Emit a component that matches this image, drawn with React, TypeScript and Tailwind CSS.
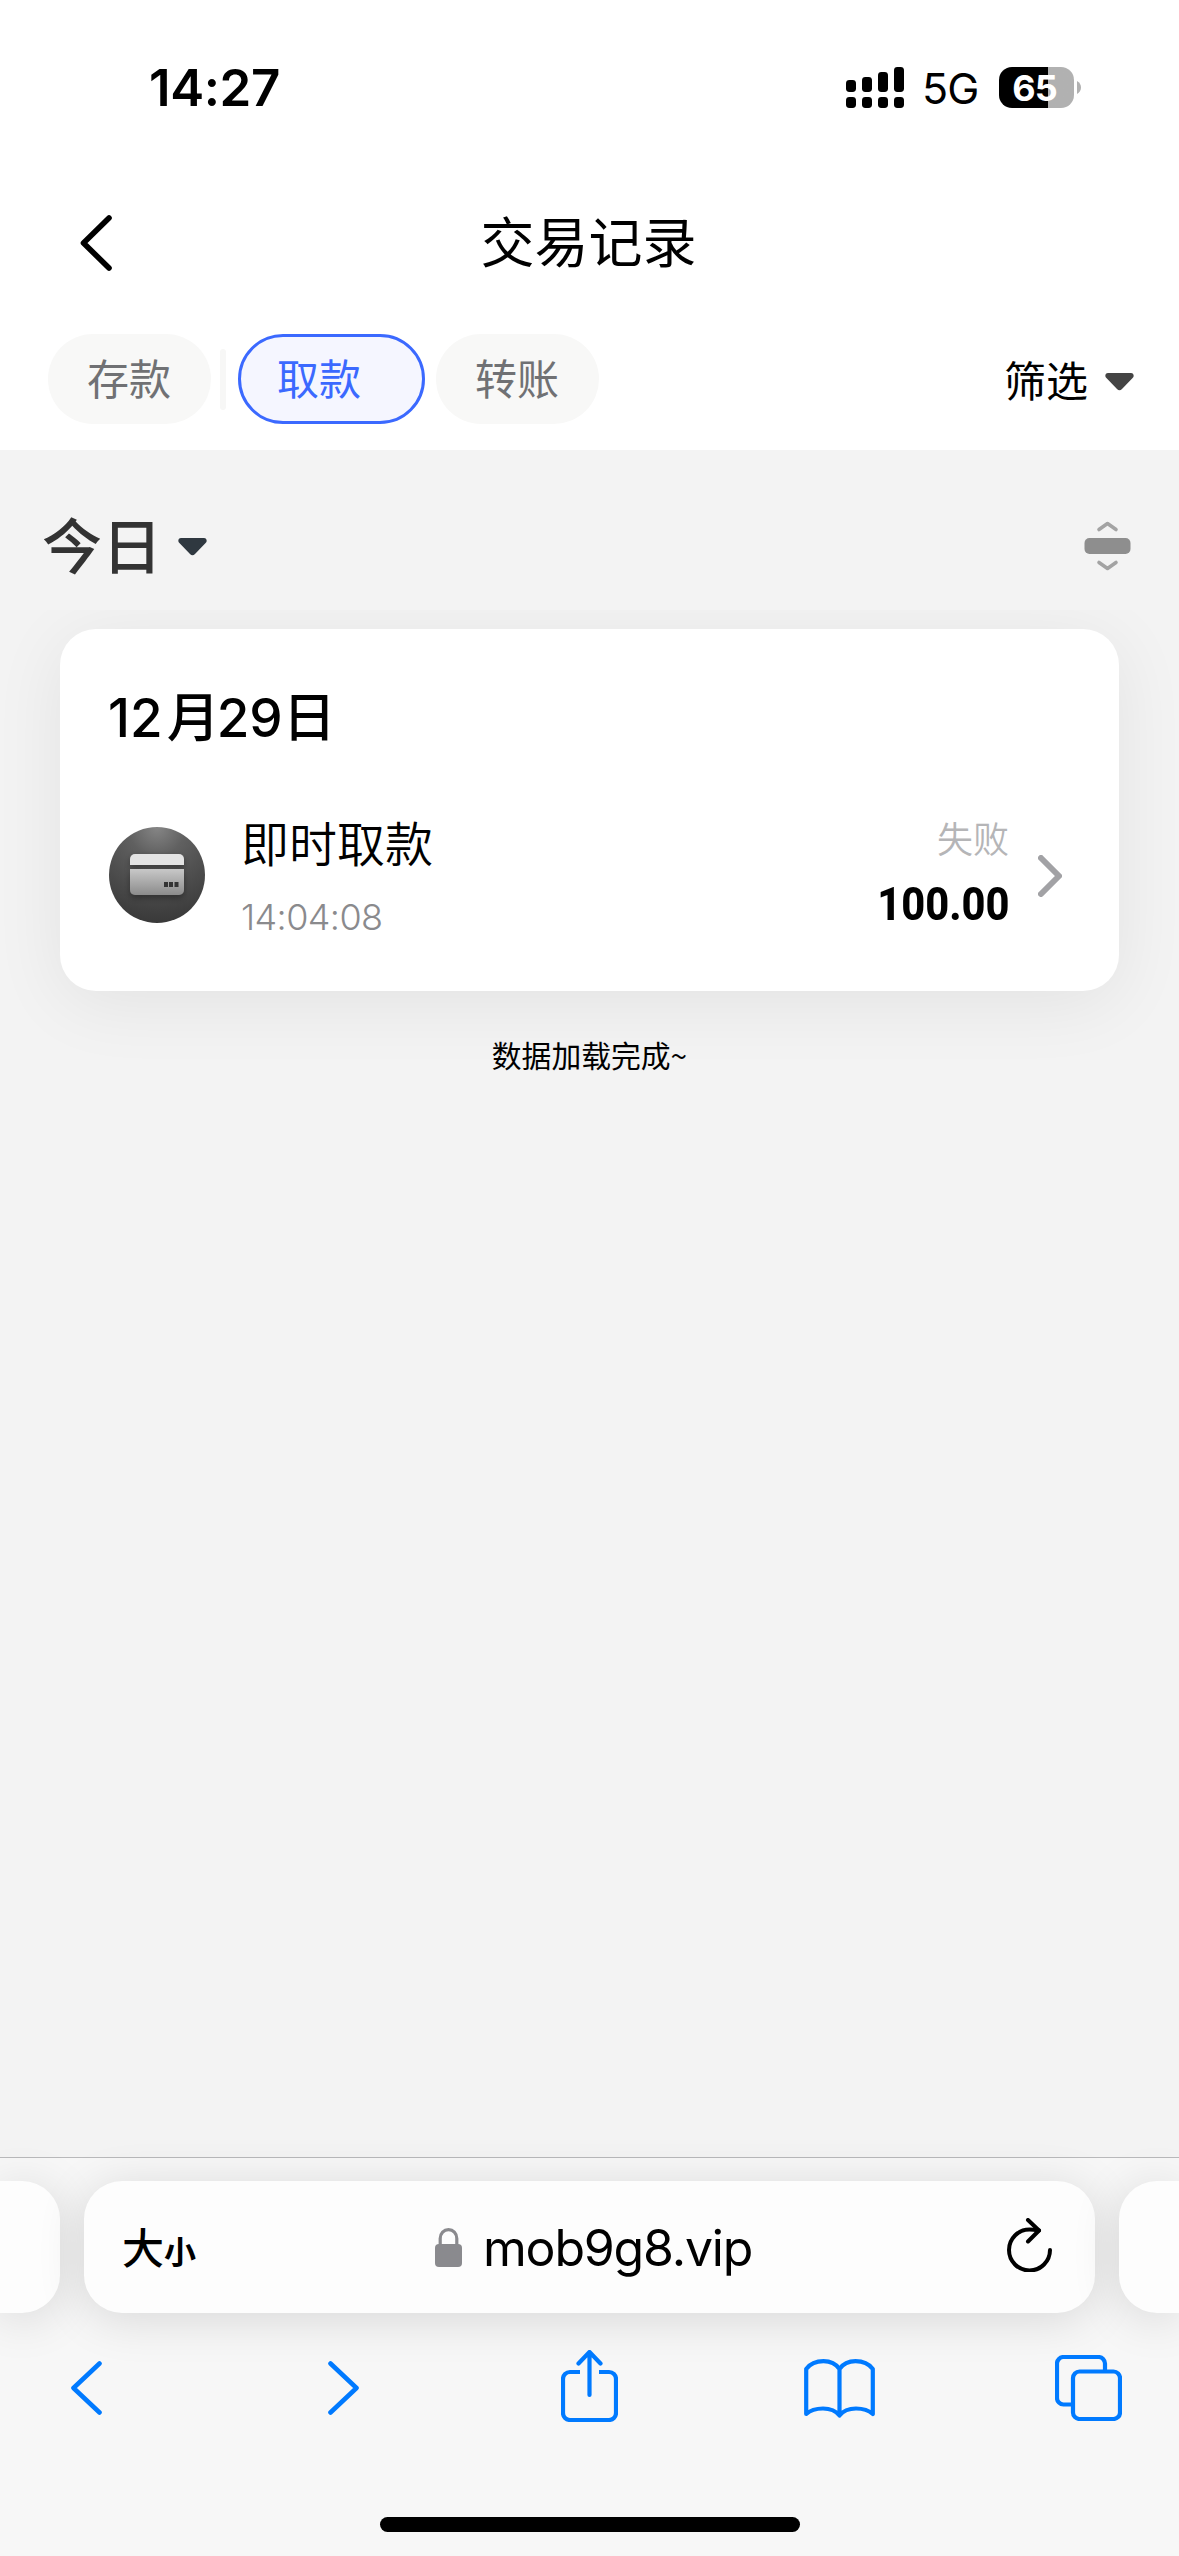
import React, { useState } from 'react';

interface IRecord {
  id: string;
  title: string;
  time: string;
  status: string;
  amount: string;
}

const RECORDS: IRecord[] = [
  { id: 'w1', title: '即时取款', time: '14:04:08', status: '失败', amount: '100.00' },
];

// Heights of the signal bars, left to right
const SIGNAL_BARS = [
  { x: 0, y: 13, h: 12 },
  { x: 16, y: 10, h: 15 },
  { x: 32, y: 5, h: 20 },
  { x: 48, y: 0, h: 25 },
];

const StatusBar: React.FC = () => (
  <div className="flex h-[174px] items-start justify-between pl-[149px] pr-[98px] pt-[62px]">
    <span className="font-['Inter'] text-[51px] leading-[51px] font-semibold tracking-[-0.4px]">14:27</span>
    <div className="mt-[5px] flex h-[41px] items-center">
      <svg width="58" height="41" viewBox="0 0 58 41" className="mr-[18px]">
        {SIGNAL_BARS.map((bar) => (
          <g key={bar.x}>
            <rect x={bar.x} y={bar.y} width="10" height={bar.h} rx="3.4" />
            <rect x={bar.x} y="30" width="10" height="11" rx="3.4" />
          </g>
        ))}
      </svg>
      <span className="mt-0.5 mr-[22px] w-[55px] font-['Inter'] text-[43px] leading-none tracking-[-1px] whitespace-nowrap">5G</span>
      <div className="flex h-[41px] w-[75px] items-center justify-center rounded-[13px] bg-linear-to-r from-black from-65% to-[#b1b1b1] to-65% pr-[4px]">
        <span className="font-['Inter'] text-[36px] leading-none font-bold tracking-[-1px] text-white">65</span>
      </div>
      <svg width="4" height="13" viewBox="0 0 4 13" className="ml-[3px]">
        <path d="M0 0C2.6 1.2 4 3.7 4 6.5S2.6 11.8 0 13Z" fill="#b1b1b1" />
      </svg>
    </div>
  </div>
);

const CaretDown: React.FC<{ color: string }> = ({ color }) => (
  <svg width="29" height="18" viewBox="0 0 29 18">
    <path d="M3 0H26C28.7 0 29.6 3.2 27.6 5L17 16C15.4 17.6 13.6 17.6 12 16L1.4 5C-.6 3.2 .3 0 3 0Z" fill={color} />
  </svg>
);

const CardBadge: React.FC = () => (
  <svg width="96" height="96" viewBox="0 0 96 96">
    <defs>
      <radialGradient id="badgeFill" cx="50%" cy="0%" r="100%">
        <stop offset="0%" stopColor="#868686" />
        <stop offset="30%" stopColor="#606060" />
        <stop offset="65%" stopColor="#4c4c4c" />
        <stop offset="100%" stopColor="#393939" />
      </radialGradient>
      <linearGradient id="cardFill" x1="0" y1="0" x2="0" y2="1">
        <stop offset="0%" stopColor="#c8c8c8" />
        <stop offset="100%" stopColor="#8b8b8b" />
      </linearGradient>
      <filter id="cardShadow" x="-30%" y="-30%" width="160%" height="160%">
        <feDropShadow dx="0" dy="3" stdDeviation="3" floodColor="#000000" floodOpacity="0.35" />
      </filter>
    </defs>
    <circle cx="48" cy="48" r="48" fill="url(#badgeFill)" />
    <g filter="url(#cardShadow)">
      <path d="M21 38V32a5 5 0 0 1 5-5H70a5 5 0 0 1 5 5V38Z" fill="#e4e4e4" />
      <path d="M21 42H75V63a5 5 0 0 1-5 5H26a5 5 0 0 1-5-5Z" fill="url(#cardFill)" />
    </g>
    <path d="M55 55h4v5h-4zM60 55h4v5h-4zM65.500 55h4v5h-4z" fill="#333333" />
  </svg>
);

const RecordRow: React.FC<{ record: IRecord }> = ({ record }) => (
  <div className="flex items-start pr-[57px] pl-[49px]">
    <div className="mt-[10px]">
      <CardBadge />
    </div>
    <div className="ml-9 flex-1">
      <p className="-mt-[2px] font-['Noto_Sans_CJK_SC',sans-serif] text-[48px] leading-[52px] font-[350]">{record.title}</p>
      <p className="mt-[29px] font-['Inter'] text-[36px] leading-[42px] font-light tracking-[-0.6px] text-[#8a8a8d]">{record.time}</p>
    </div>
    <div className="flex flex-col items-end">
      <p className="-mt-px font-['Noto_Sans_CJK_SC',sans-serif] text-[36px] leading-[42px] font-[350] text-[#b5b5b7]">{record.status}</p>
      <p className="mt-6 origin-right scale-x-[0.885] font-['Roboto'] text-[47px] leading-[44px] font-extrabold">{record.amount}</p>
    </div>
    <svg width="24" height="42" viewBox="0 0 24 42" className="mt-[38px] ml-[29px]" fill="none">
      <path d="M3 3L21 21L3 39" stroke="#a2a2a5" strokeWidth="6" strokeLinecap="round" strokeLinejoin="round" />
    </svg>
  </div>
);

const BrowserBar: React.FC = () => (
  <div className="flex h-[399px] flex-col border-t border-[#b9b9bb] bg-[#f7f7f7]">
    <div className="mt-[23px] flex h-[132px] gap-[24.5px]">
      <div className="w-[59.5px] shrink-0 rounded-r-[38px] bg-[#fdfdfd] shadow-[0_6px_48px_rgba(0,0,0,0.13)]" />
      <div className="flex flex-1 items-center rounded-[38px] bg-[#fdfdfd] pr-[43px] pl-[38px] shadow-[0_6px_48px_rgba(0,0,0,0.13)]">
        <div className="flex w-[313px] items-baseline pb-0.5 font-['Noto_Sans_CJK_SC',sans-serif] leading-none">
          <span className="text-[42px] font-medium">大</span>
          <span className="text-[32px] font-bold">小</span>
        </div>
        <svg width="27" height="39" viewBox="0 0 27 39" fill="none">
          <rect y="16" width="27" height="23" rx="4" fill="#8a8a8e" />
          <path d="M5.200 18V10.500C5.200 5.200 8.900 1.600 13.500 1.600S21.800 5.200 21.800 10.500V18" stroke="#8a8a8e" strokeWidth="3.200" />
        </svg>
        <span className="mt-0.5 ml-[21px] flex-1 font-['Inter'] text-[50px] leading-none tracking-[-1.2px]">mob9g8.vip</span>
        <svg width="45" height="54" viewBox="0 0 45 54" className="-mt-1" fill="none" stroke="#000000" strokeWidth="4" strokeLinecap="round" strokeLinejoin="round">
          <path d="M43 32A20.500 20.500 0 1 1 22.500 11.500C26 11.500 29 12 32 12.500" />
          <path d="M21 2L32 12.500L21 23.500" />
        </svg>
      </div>
      <div className="w-[60px] shrink-0 rounded-l-[38px] bg-[#fdfdfd] shadow-[0_6px_48px_rgba(0,0,0,0.13)]" />
    </div>
    <div className="mt-[37px] flex h-[72px] items-start pl-[71px] text-[#007aff]">
      <svg width="31" height="54" viewBox="0 0 31 54" className="mt-[11px]" fill="none" stroke="currentColor" strokeWidth="4.600" strokeLinecap="round" strokeLinejoin="round">
        <path d="M28.500 2.500L2.500 27L28.500 51.500" />
      </svg>
      <svg width="31" height="54" viewBox="0 0 31 54" className="mt-[11px] ml-[226px]" fill="none" stroke="currentColor" strokeWidth="4.600" strokeLinecap="round" strokeLinejoin="round">
        <path d="M2.500 2.500L28.500 27L2.500 51.500" />
      </svg>
      <svg width="57" height="72" viewBox="0 0 57 72" className="ml-[202px]" fill="none" stroke="currentColor" strokeWidth="4.200" strokeLinejoin="round">
        <path d="M19 22H9a7 7 0 0 0-7 7V63a7 7 0 0 0 7 7H48a7 7 0 0 0 7-7V29a7 7 0 0 0-7-7H38" />
        <path d="M28.500 45V2.500M17.500 13.500L28.500 2L39.500 13.500" strokeLinecap="round" />
      </svg>
      <svg width="71" height="60" viewBox="0 0 71 60" className="mt-[9px] ml-[186px]" fill="none" stroke="currentColor" strokeWidth="4.200" strokeLinecap="round" strokeLinejoin="round">
        <path d="M35.500 10C32 5 26.500 2.200 19.500 2.200S6 5 2.200 10V55C6 51.500 12 49.500 19 49.500S32 52 35.500 56.500C39 52 45 49.500 52 49.500S65 51.500 68.800 55V10C65 5 58.500 2.200 51.500 2.200S39 5 35.500 10V56" />
      </svg>
      <svg width="67" height="66" viewBox="0 0 67 66" className="mt-[5px] ml-[180px]" fill="none" stroke="currentColor" strokeWidth="4.200">
        <path d="M50 16V8.500A6.500 6.500 0 0 0 43.500 2H8.500A6.500 6.500 0 0 0 2 8.500V43A6.500 6.500 0 0 0 8.500 49.500H18" />
        <rect x="18" y="16.500" width="47" height="47.500" rx="6.500" />
      </svg>
    </div>
    <div className="mx-auto mt-[95px] h-[15px] w-[420px] rounded-full bg-black" />
  </div>
);

export const App: React.FC = () => {
  const [activeTab, setActiveTab] = useState('取款');

  const tabClass = (tab: string) =>
    activeTab === tab
      ? 'w-[187px] border-[3px] border-[#3b69ff] bg-[#f5f6ff] pl-[36px] text-[#3b69ff]'
      : 'w-[163px] bg-[#f8f8f7] pl-[39px] text-[#707174]';

  return (
    <div className="flex h-[2556px] w-[1179px] flex-col overflow-hidden bg-[#f3f3f3] text-black">
      <header className="h-[450px] bg-white">
        <StatusBar />
        <div className="grid h-[138px] grid-cols-[1fr_auto_1fr] items-center">
          <svg width="32" height="56" viewBox="0 0 32 56" className="ml-[80px]" fill="none">
            <path d="M29 3L3.500 28L29 53" stroke="#000000" strokeWidth="5.600" strokeLinecap="round" strokeLinejoin="round" />
          </svg>
          <h1 className="pr-0.5 pb-1.5 font-['Noto_Sans_CJK_SC',sans-serif] text-[54px] leading-none font-normal">交易记录</h1>
        </div>
        <div className="mt-[22px] flex h-[90px] items-center pr-[45px] pl-12 font-['Noto_Sans_CJK_SC',sans-serif] text-[42px] leading-none">
          <button onClick={() => setActiveTab('存款')} className={`h-[90px] rounded-full pb-[4px] text-left ${tabClass('存款')}`}>存款</button>
          <span className="mr-[12px] ml-[9px] h-[61px] w-1.5 rounded-full bg-[#f7f7f6]" />
          <button onClick={() => setActiveTab('取款')} className={`h-[90px] rounded-full pb-[4px] text-left ${tabClass('取款')}`}>取款</button>
          <button onClick={() => setActiveTab('转账')} className={`ml-[11px] h-[90px] rounded-full pb-[4px] text-left ${tabClass('转账')}`}>转账</button>
          <button className="ml-auto flex items-center gap-[17px]">
            <span className="pb-px">筛选</span>
            <span className="mt-[5px]"><CaretDown color="#444444" /></span>
          </button>
        </div>
      </header>

      <main className="flex-1">
        <div className="flex h-[160px] items-center justify-between pt-[31px] pr-[48px] pl-[42px]">
          <button className="flex items-center gap-[16px]">
            <span className="pb-1.5 font-['Noto_Sans_CJK_SC',sans-serif] text-[60px] leading-none font-medium text-[#333333]">今日</span>
            <span className="mt-0.5"><CaretDown color="#2f3840" /></span>
          </button>
          <svg width="47" height="52" viewBox="0 0 47 52" fill="none" stroke="#a3a3a3" strokeWidth="3.600" strokeLinecap="round" strokeLinejoin="round">
            <path d="M15 9.500L23.500 3.500L32 9.500M15 42.500L23.500 48.500L32 42.500" />
            <rect x="0.500" y="18" width="46" height="16" rx="5" fill="#8e8e8e" stroke="none" />
          </svg>
        </div>

        {/* Record list, grouped by day */}
        <section className="h-[520px] overflow-hidden px-[60px] pt-[19px]">
          <div className="h-[362px] rounded-[36px] bg-white shadow-[0_12px_72px_rgba(0,0,0,0.072)]">
            <h2 className="flex h-[188px] items-start pt-[59px] pl-[48px] font-['Inter','Noto_Sans_CJK_SC',sans-serif] text-[53px] leading-[60px] font-medium">
              12<span className="-mr-[3px] ml-1">月</span>29<span>日</span>
            </h2>
            {RECORDS.map((record) => (
              <RecordRow key={record.id} record={record} />
            ))}
          </div>
          <p className="mt-[46px] text-center font-['Noto_Sans_CJK_SC',sans-serif] text-[29.8px] leading-[34px]">数据加载完成~</p>
        </section>
      </main>

      <BrowserBar />
    </div>
  );
};

export default App;
